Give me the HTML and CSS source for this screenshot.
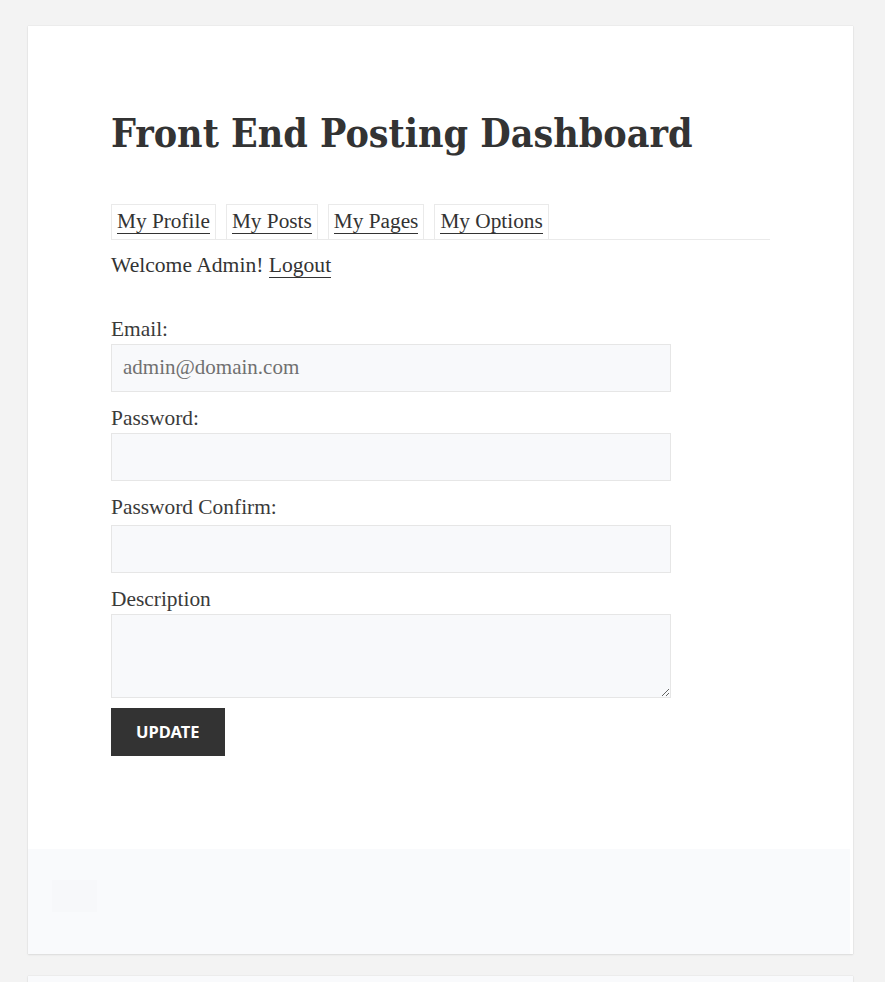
FILE: index.html
```html
<!DOCTYPE html>
<html lang="en">
<head>
    <meta charset="UTF-8">
    <meta name="viewport" content="width=device-width, initial-scale=1.0">
    <title>Front End Posting Dashboard</title>
    <link rel="stylesheet" href="styles.css">
</head>
<body>
    <div class="page">
        <article class="card">
            <div class="entry">
                <h1 class="entry-title">Front End Posting Dashboard</h1>

                <ul class="tabs">
                    <li class="tab active"><a href="#">My Profile</a></li>
                    <li class="tab"><a href="#">My Posts</a></li>
                    <li class="tab"><a href="#">My Pages</a></li>
                    <li class="tab"><a href="#">My Options</a></li>
                </ul>

                <p class="welcome">Welcome Admin! <a href="#">Logout</a></p>

                <form class="profile-form">
                    <label for="email">Email:</label>
                    <input type="text" id="email" value="admin@domain.com">

                    <label for="password">Password:</label>
                    <input type="password" id="password">

                    <label for="password2" class="wide-gap">Password Confirm:</label>
                    <input type="password" id="password2">

                    <label for="description">Description</label>
                    <textarea id="description"></textarea>

                    <button type="submit">Update</button>
                </form>
            </div>
            <footer class="entry-footer">
                <span class="footer-box"></span>
            </footer>
        </article>
        <article class="card next"></article>
    </div>
</body>
</html>
```

FILE: styles.css
```css
* {
    margin: 0;
    padding: 0;
    box-sizing: border-box;
}

body {
    background: #f3f3f3;
    color: #333;
    font-family: "Liberation Serif", serif;
}

.page {
    padding: 26px 32px 0 28px;
    display: flex;
    flex-direction: column;
    gap: 22px;
}

.card {
    background: #fff;
    box-shadow: 0 0 1px rgba(0, 0, 0, 0.15), 0 1px 2px rgba(0, 0, 0, 0.08);
}

.entry {
    padding: 84px 83px 93px 83px;
}

.entry-title {
    font-family: "DejaVu Serif Condensed", "DejaVu Serif", serif;
    font-size: 39px;
    font-weight: bold;
    line-height: 1.2;
    color: #333;
    margin-bottom: 47px;
}

.tabs {
    list-style: none;
    display: flex;
    gap: 10px;
    border-bottom: 1px solid #eaeaea;
}

.tab {
    border: 1px solid #eaeaea;
    border-bottom: none;
    padding: 4px 5px 0 5px;
    height: 35px;
}

.tab a {
    color: #333;
    text-decoration: none;
    border-bottom: 1px solid #333;
    font-size: 21.3px;
}

.welcome a {
    color: #333;
    text-decoration: none;
    border-bottom: 1px solid #333;
}

.welcome {
    font-size: 21.6px;
    margin-top: 10px;
    line-height: 30px;
}

.profile-form {
    display: flex;
    flex-direction: column;
    margin-top: 34px;
    width: 560px;
}

label {
    font-size: 21.4px;
    line-height: 30px;
    color: #3a3a3a;
}

label.wide-gap {
    margin-bottom: 3px;
}

input,
textarea {
    font-family: "Liberation Serif", serif;
    font-size: 21px;
    color: #707070;
    background: #f8f9fb;
    border: 1px solid #e6e6e6;
    padding: 0 11px;
    height: 48px;
    margin-bottom: 11px;
}

textarea {
    height: 84px;
    margin-bottom: 10px;
    resize: vertical;
}

button[type="submit"] {
    align-self: flex-start;
    background: #333;
    color: #fff;
    border: none;
    font-family: "Noto Sans", sans-serif;
    font-weight: bold;
    font-size: 16.5px;
    text-transform: uppercase;
    padding: 0 25px;
    height: 48px;
}

.entry-footer {
    background: #f9fafc;
    height: 105px;
    margin: 0 3px 0 0;
    padding: 31px 0 0 24px;
}

.footer-box {
    display: block;
    width: 45px;
    height: 32px;
    background: #f7f8fa;
}

.next {
    height: 40px;
    background: #f9fafc;
}
```
